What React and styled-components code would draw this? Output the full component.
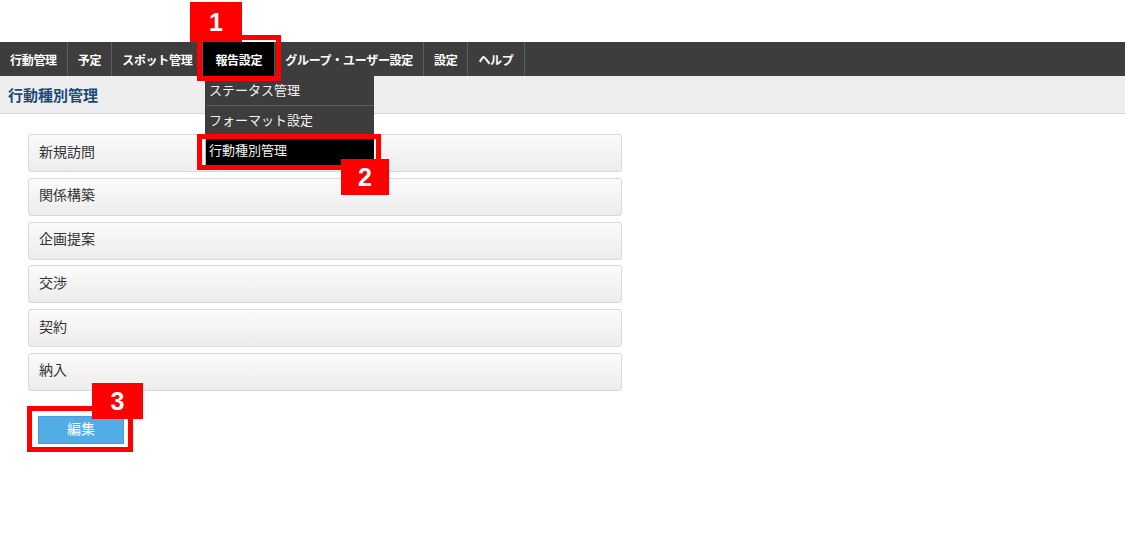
import React from 'react';
import styled, { createGlobalStyle } from 'styled-components';

const GlobalStyle = createGlobalStyle`
  html, body {
    margin: 0;
    padding: 0;
    background: #ffffff;
  }
  body {
    font-family: "Noto Sans CJK JP", "Noto Sans", sans-serif;
    width: 1125px;
    height: 556px;
    overflow: hidden;
  }
`;

const Page = styled.div`
  position: relative;
  padding-top: 42px;
  width: 1125px;
  height: 556px;
  box-sizing: border-box;
`;

const NavBar = styled.nav`
  position: relative;
  display: flex;
  height: 34px;
  background: #3d3d3d;
`;

const NavItem = styled.div`
  display: flex;
  align-items: center;
  padding: 0 ${(p) => (p.$active ? 12 : 10)}px;
  border-right: 1px solid ${(p) => (p.$active ? '#555' : '#5c5c66')};
  background: ${(p) => (p.$active ? '#000' : 'transparent')};
  color: #fff;
  font-size: 12px;
  font-weight: 700;
  letter-spacing: -0.3px;
  white-space: nowrap;
`;

const Dropdown = styled.ul`
  position: absolute;
  left: 205px;
  top: 100%;
  width: 169px;
  margin: 0;
  padding: 0;
  list-style: none;
  background: #3d3d3d;
  z-index: 5;
`;

const DropItem = styled.li`
  box-sizing: border-box;
  height: 30px;
  display: flex;
  align-items: center;
  padding: 0 0 2px 3px;
  border-bottom: 1px solid #5e5e5e;
  border-left: 1px solid ${(p) => (p.$active ? '#bbb' : '#3d3d3d')};
  background: ${(p) => (p.$active ? '#000' : 'transparent')};
  color: #f2f2f2;
  font-size: 13px;
  line-height: 1;
`;

const SubHeader = styled.div`
  height: 37px;
  display: flex;
  align-items: center;
  padding: 0 0 1px 8px;
  box-sizing: border-box;
  height: 38px;
  background: #eeeeee;
  border-bottom: 1px solid #d6d6d6;
`;

const Title = styled.h1`
  margin: 0;
  font-size: 15px;
  font-weight: 700;
  line-height: 1;
  color: #1c4a78;
`;

const Content = styled.div`
  padding: 20px 0 0 28px;
`;

const List = styled.div`
  display: flex;
  flex-direction: column;
  gap: 5.8px;
  width: 594px;
`;

const Row = styled.div`
  display: flex;
  align-items: center;
  padding: 0 0 5px 10px;
  height: 31px;
  border: 1px solid #d9d9d9;
  border-radius: 3px;
  background: linear-gradient(#fbfbfb, #ececec);
  color: #333;
  font-size: 14px;
  line-height: 1;
`;

const EditButton = styled.button`
  margin: 25px 0 0 10px;
  width: 86px;
  height: 28px;
  border: 1px solid #4a9fd8;
  background: #52ade6;
  color: #fff;
  font-family: "Noto Sans CJK JP", sans-serif;
  font-size: 14px;
  line-height: 1;
  padding: 0 0 3px;
`;

const Marker = styled.div`
  position: absolute;
  box-sizing: border-box;
  border: 5px solid #ff0000;
  pointer-events: none;
  z-index: 10;
`;

const Badge = styled.div`
  position: absolute;
  display: flex;
  align-items: center;
  justify-content: center;
  background: #ff0000;
  color: #fff;
  font-family: "Liberation Sans", Arial, sans-serif;
  font-weight: 700;
  font-size: 25px;
  z-index: 11;
`;

const navItems = ['行動管理', '予定', 'スポット管理', '報告設定', 'グループ・ユーザー設定', '設定', 'ヘルプ'];
const menuItems = ['ステータス管理', 'フォーマット設定', '行動種別管理'];
const rows = ['新規訪問', '関係構築', '企画提案', '交渉', '契約', '納入'];

const markers = [
  { box: { left: 197, top: 35, width: 84, height: 46 }, badge: { left: 190, top: 2, width: 52, height: 40 }, n: 1 },
  { box: { left: 197, top: 134, width: 184, height: 36 }, badge: { left: 341, top: 159, width: 48, height: 36 }, n: 2 },
  { box: { left: 27, top: 406, width: 106, height: 46 }, badge: { left: 92, top: 383, width: 51, height: 36 }, n: 3 },
];

export default function App() {
  return (
    <Page>
      <GlobalStyle />
      <NavBar>
        {navItems.map((label) => (
          <NavItem key={label} $active={label === '報告設定'}>
            {label}
          </NavItem>
        ))}
        <Dropdown>
          {menuItems.map((label, i) => (
            <DropItem key={label} $active={i === 2}>
              {label}
            </DropItem>
          ))}
        </Dropdown>
      </NavBar>
      <SubHeader>
        <Title>行動種別管理</Title>
      </SubHeader>
      <Content>
        <List>
          {rows.map((r) => (
            <Row key={r}>{r}</Row>
          ))}
        </List>
        <EditButton>編集</EditButton>
      </Content>
      {markers.map((m) => (
        <React.Fragment key={m.n}>
          <Marker style={m.box} />
          <Badge style={m.badge}>{m.n}</Badge>
        </React.Fragment>
      ))}
    </Page>
  );
}
